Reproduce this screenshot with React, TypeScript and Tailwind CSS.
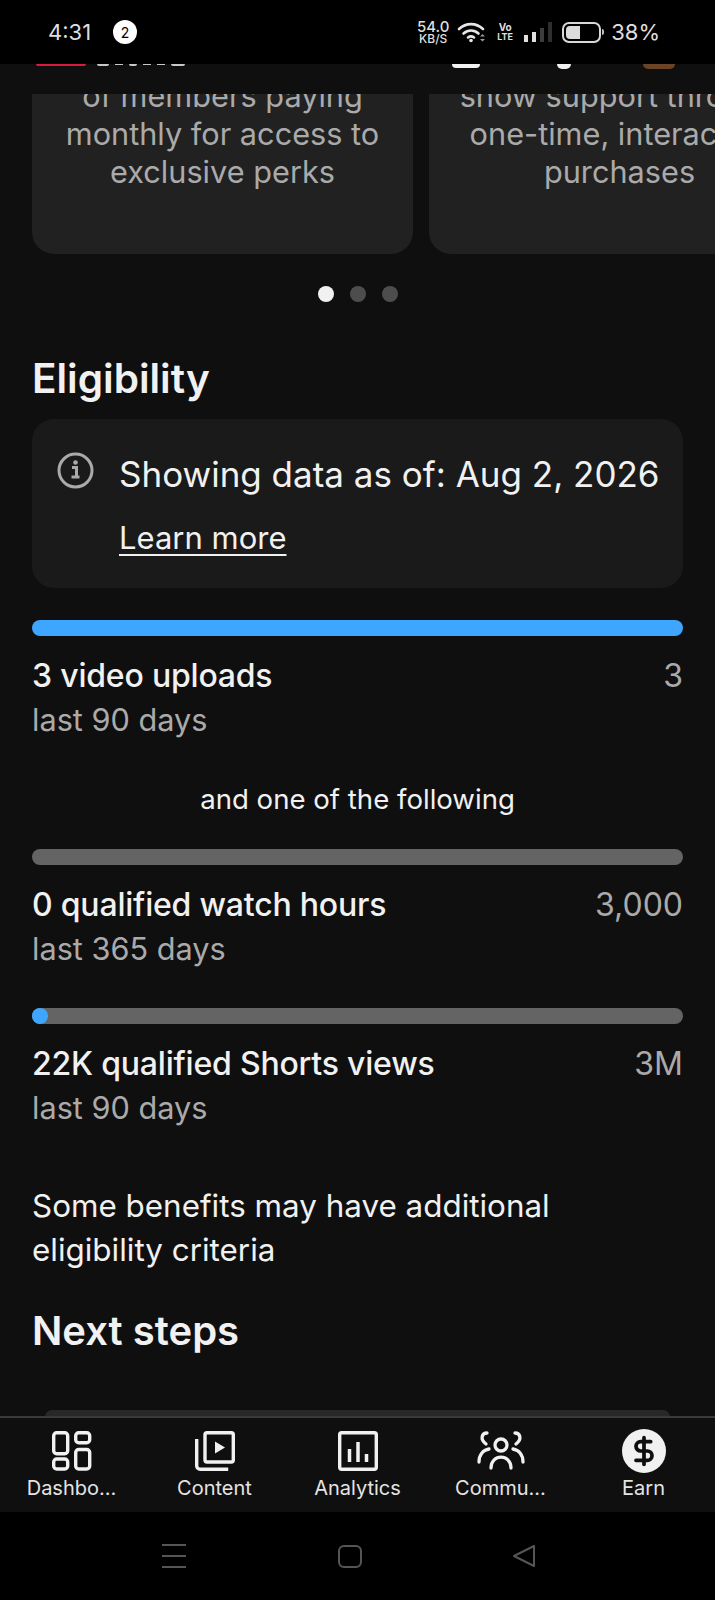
import React from 'react';
import { DollarSign } from 'lucide-react';

const StatusBar: React.FC = () => {
  return (
    <div className="h-[64px] shrink-0 bg-black text-[#dedede] flex items-center justify-between pl-[48px] pr-[55px]">
      <div className="flex items-center">
        <span className="text-[22px] leading-none w-[65px]">4:31</span>
        <span className="w-[24px] h-[24px] rounded-full bg-white text-black text-[14px] flex items-center justify-center">2</span>
      </div>
      <div className="flex items-center">
        <div className="flex flex-col items-center w-[33px] font-medium">
          <span className="text-[15px] leading-[12px]">54.0</span>
          <span className="text-[12px] leading-[11px]">KB/S</span>
        </div>
        <svg width="30" height="22" viewBox="0 0 30 22" className="ml-[7px]" fill="none" stroke="#e6e6e6" strokeLinecap="round">
          <path d="M2 8c7-6.500 17-6.500 24 0" strokeWidth="2.600" />
          <path d="M6.500 12.500c4.500-4 10.500-4 15 0" strokeWidth="2.600" />
          <path d="M11 16.500c2-1.500 4-1.500 6 0" strokeWidth="2.600" />
          <circle cx="14" cy="19.500" r="1.800" fill="#e6e6e6" stroke="none" />
          <path d="M23 15.500l2.500-2.500 2.500 2.500zM23 18l2.500 2.500 2.500-2.500z" fill="#9a9a9a" stroke="none" />
        </svg>
        <div className="flex flex-col items-center w-[15px] ml-[11px] font-bold">
          <span className="text-[10px] leading-[10px]">Vo</span>
          <span className="text-[9px] leading-[10px]">LTE</span>
        </div>
        <div className="flex items-end gap-[3.500px] h-[20px] ml-[11px]">
          <span className="w-[4.500px] h-[7px] bg-[#e0e0e0]" />
          <span className="w-[4.500px] h-[10px] bg-[#e0e0e0]" />
          <span className="w-[4.500px] h-[14px] bg-[#3d3d3d]" />
          <span className="w-[4.500px] h-[20px] bg-[#2e2e2e]" />
        </div>
        <div className="flex items-center ml-[10px]">
          <div className="w-[39px] h-[21px] rounded-[7px] border-2 border-[#d8d8d8] p-[2px]">
            <div className="w-[14px] h-full rounded-l-[4px] bg-[#dcdcdc]" />
          </div>
          <span className="w-[2px] h-[6px] ml-[1px] rounded-r bg-[#bdbdbd]" />
        </div>
        <span className="text-[22px] leading-none ml-[7px]">38%</span>
      </div>
    </div>
  );
};

const Metric: React.FC<{ title: string; period: string; target: string }> = ({ title, period, target }) => {
  return (
    <div className="mt-[18px]">
      <div className="flex justify-between text-[32px] leading-[44px]">
        <span className="text-[#f1f1f1] font-medium tracking-[-0.2px]">{title}</span>
        <span className="text-[#aaaaaa]">{target}</span>
      </div>
      <div className="text-[30.700px] leading-[43px] text-[#aaaaaa]">{period}</div>
    </div>
  );
};

const NavItem: React.FC<{ label: string; children: React.ReactNode }> = ({ label, children }) => {
  return (
    <div className="flex flex-col items-center">
      <div className="h-[46px] w-[50px] flex items-center justify-center">{children}</div>
      <span className="text-[20px] leading-[26px] mt-[1px] text-[#e4e4e4]">{label}</span>
    </div>
  );
};

export default function App() {
  return (
    <div className="w-[715px] h-[1600px] flex flex-col overflow-hidden bg-[#0f0f0f]" style={{ fontFamily: 'Inter, Roboto, sans-serif' }}>
      <StatusBar />

      <main className="flex-1 overflow-hidden">
        {/* header row is scrolled away, only the bottoms stay visible */}
        <div className="h-[30px] overflow-hidden">
          <div className="flex items-start h-[5px] pl-[36px]">
            <span className="w-[50px] h-[2px] rounded-b-full bg-[#d81c3f]" />
            <div className="flex gap-[6px] ml-[11px]">
              <span className="w-[12px] h-[2px] rounded-b-full bg-[#c8c8c8]" />
              <span className="w-[8px] h-[1px] bg-[#c8c8c8]" />
              <span className="w-[8px] h-[2px] rounded-b-full bg-[#c8c8c8]" />
              <span className="w-[8px] h-[1px] bg-[#c8c8c8]" />
              <span className="w-[8px] h-[1px] bg-[#c8c8c8]" />
              <span className="w-[14px] h-[2px] rounded-b-full bg-[#c8c8c8]" />
            </div>
            <span className="w-[28px] h-[4px] ml-[267px] rounded-b-[14px] bg-[#f1f1f1]" />
            <span className="w-[14px] h-[5px] ml-[77px] rounded-b-[14px] bg-[#f1f1f1]" />
            <span className="w-[32px] h-[5px] ml-[72px] rounded-b-[16px] bg-[#6b4426]" />
          </div>
        </div>

        <div className="flex gap-[16px] pl-[32px] h-[160px] overflow-hidden text-[30.700px] leading-[38px] text-[#aaaaaa] text-center">
          <div className="w-[381px] shrink-0 h-full overflow-hidden rounded-b-[22px] bg-[#212121] px-[16px]">
            <div className="-mt-[17px]">of members paying<br />monthly for access to<br />exclusive perks</div>
          </div>
          <div className="w-[381px] shrink-0 h-full overflow-hidden rounded-b-[22px] bg-[#212121] px-[16px]">
            <div className="-mt-[17px] whitespace-nowrap">show support through<br />one-time, interactive<br />purchases</div>
          </div>
        </div>

        <div className="flex justify-center gap-[16px] mt-[32px]">
          <span className="w-[16px] h-[16px] rounded-full bg-[#f1f1f1]" />
          <span className="w-[16px] h-[16px] rounded-full bg-[#4d4d4d]" />
          <span className="w-[16px] h-[16px] rounded-full bg-[#4d4d4d]" />
        </div>

        <div className="px-[32px]">
          <h2 className="mt-[53px] text-[40.500px] leading-[48px] font-semibold text-[#f1f1f1]">Eligibility</h2>

          <div className="mt-[16px] h-[169px] rounded-[22px] bg-[#1a1a1a] flex pl-[25px] pt-[33px]">
            <svg width="37" height="37" viewBox="0 0 37 37" fill="none" className="shrink-0">
              <circle cx="18.500" cy="18.500" r="16.500" stroke="#aaaaaa" strokeWidth="3" />
              <circle cx="18.500" cy="10.500" r="2.300" fill="#aaaaaa" />
              <path d="M15 15.500h4.500v9M14.500 25h8" stroke="#aaaaaa" strokeWidth="3" />
            </svg>
            <div className="ml-[25px] text-[#f1f1f1]">
              <div className="text-[35px] leading-[44px] whitespace-nowrap">Showing data as of: Aug 2, 2026</div>
              <div className="mt-[20px] text-[31px] leading-[44px] underline underline-offset-[5px] decoration-2">Learn more</div>
            </div>
          </div>

          <div className="mt-[32px] h-[16px] rounded-full bg-[#3ea6ff]" />
          <Metric title="3 video uploads" period="last 90 days" target="3" />

          <div className="mt-[38px] text-center text-[27.600px] leading-[40px] text-[#f1f1f1]">and one of the following</div>

          <div className="mt-[30px] h-[16px] rounded-full bg-[#646464]" />
          <Metric title="0 qualified watch hours" period="last 365 days" target="3,000" />

          <div className="mt-[38px] h-[16px] rounded-full bg-[#646464]">
            <div className="w-[16px] h-[16px] rounded-full bg-[#3ea6ff]" />
          </div>
          <Metric title="22K qualified Shorts views" period="last 90 days" target="3M" />

          <p className="mt-[55px] text-[31.400px] leading-[44px] text-[#f1f1f1]">
            Some benefits may have additional<br />eligibility criteria
          </p>

          <h2 className="mt-[35px] text-[40px] leading-[48px] font-semibold text-[#f1f1f1]">Next steps</h2>
          <div className="mt-[55px] mx-[13px] h-[7px] rounded-t-[20px] bg-[#282828]" />
        </div>
      </main>

      <nav className="h-[96px] shrink-0 border-t-2 border-[#3a3a3a] bg-[#0f0f0f] grid grid-cols-5 pt-[10px]">
        <NavItem label="Dashbo…">
          <svg width="40" height="40" viewBox="0 0 40 40" fill="none" stroke="#f1f1f1" strokeWidth="3.400">
            <rect x="1.700" y="1.700" width="14" height="21" rx="3" />
            <rect x="23.700" y="1.700" width="14" height="10" rx="3" />
            <rect x="1.700" y="28" width="14" height="10" rx="3" />
            <rect x="23.700" y="18.500" width="14" height="19.500" rx="3" />
          </svg>
        </NavItem>
        <NavItem label="Content">
          <svg width="40" height="40" viewBox="0 0 40 40" fill="none" stroke="#f1f1f1" strokeWidth="3.400">
            <rect x="10" y="1.700" width="28.300" height="29.300" rx="2" />
            <path d="M1.700 8v27a3.500 3.500 0 0 0 3.500 3.300h28" />
            <path d="M20 10.500l10 6-10 6z" fill="#f1f1f1" stroke="none" />
          </svg>
        </NavItem>
        <NavItem label="Analytics">
          <svg width="40" height="40" viewBox="0 0 40 40" fill="none" stroke="#f1f1f1" strokeWidth="3.400">
            <rect x="1.700" y="1.700" width="36.600" height="36.600" rx="2" />
            <path d="M11.500 18v13M20 11v20M28.500 23v8" strokeWidth="3.500" />
          </svg>
        </NavItem>
        <NavItem label="Commu…">
          <svg width="48" height="40" viewBox="0 0 48 40" fill="none" stroke="#f1f1f1" strokeWidth="3.300" strokeLinecap="round">
            <circle cx="24" cy="14" r="6" />
            <path d="M14 37c0-14.500 20-14.500 20 0" />
            <path d="M10 2c-5 0-7.500 6-1 11" />
            <path d="M38 2c5 0 7.500 6 1 11" />
            <path d="M2 31c0-7 4-12 10-13" />
            <path d="M46 31c0-7-4-12-10-13" />
          </svg>
        </NavItem>
        <NavItem label="Earn">
          <div className="w-[44px] h-[44px] rounded-full bg-[#f1f1f1] flex items-center justify-center">
            <DollarSign size={32} strokeWidth={2.800} color="#0f0f0f" />
          </div>
        </NavItem>
      </nav>

      <div className="h-[88px] shrink-0 bg-black flex items-center justify-center gap-[152px] pr-[18px]">
        <div className="flex flex-col gap-[9px] w-[24px]">
          <span className="h-[2px] bg-[#555555]" />
          <span className="h-[2px] bg-[#555555]" />
          <span className="h-[2px] bg-[#555555]" />
        </div>
        <div className="w-[24px] h-[23px] rounded-[6px] border-2 border-[#555555]" />
        <svg width="24" height="24" viewBox="0 0 24 24" fill="none" stroke="#555555" strokeWidth="2" strokeLinejoin="round" className="-ml-[2px]">
          <path d="M2 12L22 2v20z" />
        </svg>
      </div>
    </div>
  );
}
